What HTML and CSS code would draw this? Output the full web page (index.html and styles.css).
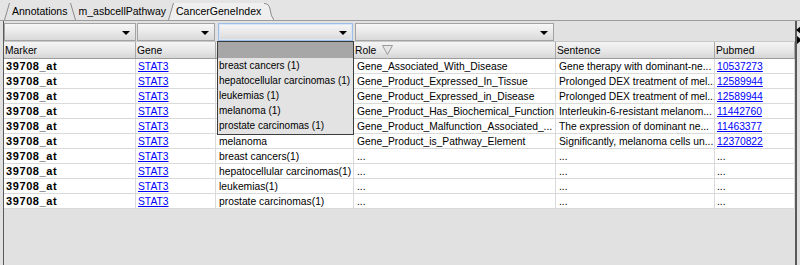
FILE: index.html
```html
<!DOCTYPE html>
<html>
<head>
<meta charset="utf-8">
<link rel="stylesheet" href="styles.css">
</head>
<body>
<div class="tabs">
  <svg class="sep" width="6" height="17" viewBox="0 0 6 17"><line x1="0.5" y1="17" x2="5.5" y2="0" stroke="#8c8c8c"/></svg>
  <span class="tab t1">Annotations</span>
  <svg class="sep" width="6" height="17" viewBox="0 0 6 17"><line x1="0.5" y1="0" x2="5.5" y2="17" stroke="#8c8c8c"/></svg>
  <span class="tab t2">m_asbcellPathway</span>
  <svg class="sep" width="6" height="17" viewBox="0 0 6 17"><polygon points="6,0 6,17 0,17" fill="#efefef"/><line x1="0.5" y1="17" x2="5.5" y2="0" stroke="#8c8c8c"/></svg>
  <span class="tab sel">CancerGeneIndex</span>
  <svg class="sep wide" width="10" height="17" viewBox="0 0 10 17"><path d="M0 0 Q5 0 6 6 Q7 14 10 17 L0 17 Z" fill="#efefef"/><path d="M0 0.5 Q5 0.5 6 6 Q7 14 10 17" fill="none" stroke="#8c8c8c"/></svg>
</div>

<div class="panel">
  <div class="filters">
    <div class="combo c1"><span class="arrow"></span></div>
    <div class="combo c2"><span class="arrow"></span></div>
    <div class="combo c3 focus"><span class="arrow"></span></div>
    <div class="combo c4"><span class="arrow"></span></div>
  </div>

  <div class="row head">
    <div class="hc">Marker</div>
    <div class="hc">Gene</div>
    <div class="hc"></div>
    <div class="hc">Role <svg class="funnel" width="11" height="10" viewBox="0 0 11 10"><polygon points="0.5,0.5 10.5,0.5 5.5,9.5" fill="#e6e6e6" stroke="#9a9a9a"/></svg></div>
    <div class="hc">Sentence</div>
    <div class="hc">Pubmed</div>
  </div>

  <div class="row"><div class="c mk">39708_at</div><div class="c"><a>STAT3</a></div><div class="c"></div><div class="c">Gene_Associated_With_Disease</div><div class="c">Gene therapy with dominant-ne...</div><div class="c"><a>10537273</a></div></div>
  <div class="row"><div class="c mk">39708_at</div><div class="c"><a>STAT3</a></div><div class="c"></div><div class="c">Gene_Product_Expressed_In_Tissue</div><div class="c">Prolonged DEX treatment of mel...</div><div class="c"><a>12589944</a></div></div>
  <div class="row"><div class="c mk">39708_at</div><div class="c"><a>STAT3</a></div><div class="c"></div><div class="c">Gene_Product_Expressed_in_Disease</div><div class="c">Prolonged DEX treatment of mel...</div><div class="c"><a>12589944</a></div></div>
  <div class="row"><div class="c mk">39708_at</div><div class="c"><a>STAT3</a></div><div class="c"></div><div class="c">Gene_Product_Has_Biochemical_Function</div><div class="c">Interleukin-6-resistant melanom...</div><div class="c"><a>11442760</a></div></div>
  <div class="row"><div class="c mk">39708_at</div><div class="c"><a>STAT3</a></div><div class="c"></div><div class="c">Gene_Product_Malfunction_Associated_...</div><div class="c">The expression of dominant ne...</div><div class="c"><a>11463377</a></div></div>
  <div class="row"><div class="c mk">39708_at</div><div class="c"><a>STAT3</a></div><div class="c">melanoma</div><div class="c">Gene_Product_is_Pathway_Element</div><div class="c">Significantly, melanoma cells un...</div><div class="c"><a>12370822</a></div></div>
  <div class="row"><div class="c mk">39708_at</div><div class="c"><a>STAT3</a></div><div class="c">breast cancers(1)</div><div class="c">...</div><div class="c">...</div><div class="c">...</div></div>
  <div class="row"><div class="c mk">39708_at</div><div class="c"><a>STAT3</a></div><div class="c">hepatocellular carcinomas(1)</div><div class="c">...</div><div class="c">...</div><div class="c">...</div></div>
  <div class="row"><div class="c mk">39708_at</div><div class="c"><a>STAT3</a></div><div class="c">leukemias(1)</div><div class="c">...</div><div class="c">...</div><div class="c">...</div></div>
  <div class="row"><div class="c mk">39708_at</div><div class="c"><a>STAT3</a></div><div class="c">prostate carcinomas(1)</div><div class="c">...</div><div class="c">...</div><div class="c">...</div></div>
</div>

<div class="popup">
  <div class="pop-top"></div>
  <div class="pop-item">breast cancers (1)</div>
  <div class="pop-item">hepatocellular carcinomas (1)</div>
  <div class="pop-item">leukemias (1)</div>
  <div class="pop-item">melanoma (1)</div>
  <div class="pop-item">prostate carcinomas (1)</div>
</div>

<svg class="scroll-arrows" width="6" height="18" viewBox="0 0 6 18"><polygon points="0,4 5,0 5,8" fill="#000"/><polygon points="1,10 6,14 1,18" fill="#000"/></svg>
</body>
</html>
```

FILE: styles.css
```css
* { box-sizing: border-box; }

body {
  margin: 0;
  width: 800px;
  height: 265px;
  overflow: hidden;
  position: relative;
  background: #e1e1e1;
  font-family: "Liberation Sans", Arial, sans-serif;
  font-size: 10.3px;
  color: #000;
}

.tabs {
  height: 21px;
  display: flex;
  align-items: flex-end;
  padding-left: 4px;
  background: #e4e4e4;
  border-bottom: 1px solid #9c9c9c;
}

.sep { display: block; flex: none; }

.tab {
  height: 17px;
  line-height: 16px;
  white-space: nowrap;
  font-size: 10.5px;
}
.t1 { padding: 0 3px 0 2px; }
.t2 { padding: 0 2px 0 2px; }
.sel { padding: 0 3px 0 2px; background: #efefef; }

.panel {
  margin-left: 3px;
  width: 794px;
  height: 244px;
  border-left: 1px solid #5a5a5a;
  border-right: 2px solid #5a5a5a;
  padding-top: 2px;
}

.filters {
  display: grid;
  grid-template-columns: 132px 80px 138px 202px;
  height: 18px;
}

.combo {
  position: relative;
  height: 18px;
  border: 1px solid #a3a3a3;
  background: linear-gradient(#f7f7f7, #e9e9e9 50%, #d9d9d9);
}
.c1 { margin-right: 0; }
.c2 { margin: 0 1px 0 1px; }
.c3 { margin: 0 1px 0 2px; }
.c4 { margin: 0 2px 0 1px; }
.focus {
  border-color: #9dbde6;
  box-shadow: inset 0 0 0 1px #d8e6f6;
}

.arrow {
  position: absolute;
  right: 5px;
  top: 7px;
  width: 0;
  height: 0;
  border-left: 4px solid transparent;
  border-right: 4px solid transparent;
  border-top: 4px solid #000;
}

.row {
  display: grid;
  grid-template-columns: 132px 80px 138px 202px 159px 80px;
  height: 15px;
  background: #fff;
  border-bottom: 1px solid #dadada;
}

.head {
  height: 18px;
  background: #e1e1e1;
  border-bottom: 1px solid #9c9c9c;
  border-top: 1px solid #c8c8c8;
}

.hc {
  display: flex;
  align-items: center;
  padding-left: 1px;
  line-height: 15px;
  background: linear-gradient(#f4f4f4, #e6e6e6 60%, #d6d6d6);
  border-right: 1px solid #a8a8a8;
  white-space: nowrap;
  overflow: hidden;
}

.funnel { margin-left: 6px; }

.c {
  padding-left: 2px;
  padding-top: 1px;
  line-height: 13px;
  white-space: nowrap;
  overflow: hidden;
  border-right: 1px solid #dadada;
}
.row .c:nth-child(3),
.row .c:nth-child(4),
.row .c:nth-child(5) { padding-left: 3px; }

.mk { font-weight: bold; font-size: 11px; letter-spacing: 0.6px; }

a {
  color: #0000ff;
  text-decoration: underline;
}

.popup {
  position: absolute;
  left: 217px;
  top: 41px;
  width: 137px;
  height: 94px;
  border: 1px solid #3c3c3c;
  background: #e3e3e3;
}

.pop-top {
  height: 16px;
  background: #a7a7a7;
}

.pop-item {
  height: 15px;
  line-height: 15px;
  padding-left: 1px;
  font-size: 10px;
  white-space: nowrap;
  overflow: hidden;
}

.scroll-arrows {
  position: absolute;
  left: 796px;
  top: 26px;
}
```
